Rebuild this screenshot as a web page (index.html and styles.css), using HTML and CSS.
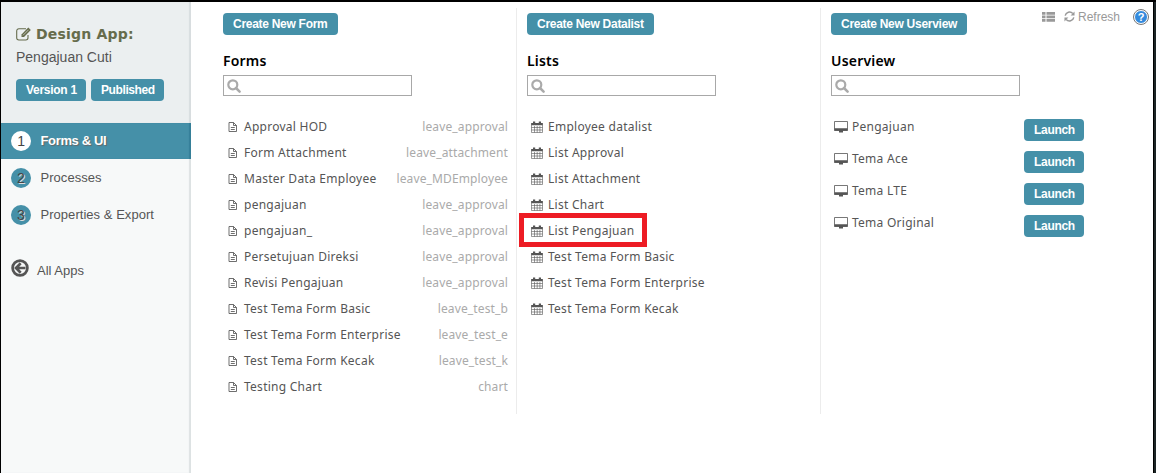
FILE: index.html
```
<!DOCTYPE html>
<html lang="en">
<head>
<meta charset="utf-8">
<title>Design App: Pengajuan Cuti</title>
<link rel="stylesheet" href="styles.css">
</head>
<body>
<svg width="0" height="0" class="defs">
  <symbol id="doc" viewBox="0 0 10 12"><path d="M1 1.500h4.500L8.500 4.500V10.500H1zM5.500 1.500V4.500h3M2.800 6.500h4M2.800 8.500h4" fill="none" stroke="currentColor" stroke-width=".85"/></symbol>
  <symbol id="cal" viewBox="0 0 12 12"><path d="M.5 2.500h11V11.500H.5zM.5 6.500h11M.5 9h11M3.500 5v6.500M6.200 5v6.500M8.900 5v6.500" fill="none" stroke="currentColor" stroke-width=".6"/><path d="M.3 2h11.400v2.300H.3zM2 .5h2.200v3H2zM7.800.5H10v3H7.800z" fill="currentColor"/></symbol>
  <symbol id="screen" viewBox="0 0 14 12"><path d="M.5.5h13v9H.5z" fill="none" stroke="currentColor" stroke-width=".8"/><path d="M.5 7.300h13v2.400H.5zM5 9.500h4v2H5z" fill="currentColor"/></symbol>
  <symbol id="search" viewBox="0 0 14 14"><circle cx="5.800" cy="5.800" r="4.500" fill="none" stroke="currentColor" stroke-width="2.200"/><path d="M9 9l3.600 3.600" stroke="currentColor" stroke-width="2.500" stroke-linecap="round"/></symbol>
</svg>
<div class="app">
  <aside class="side">
    <header class="side-head">
      <h1><svg class="edit" viewBox="0 0 16 14"><path d="M12 8v2.800A2.200 2.200 0 0 1 9.800 13H2.900A2.200 2.200 0 0 1 .7 10.800V4A2.200 2.200 0 0 1 2.900 1.800H10" fill="none" stroke="currentColor" stroke-width="1.100"/><path d="M5.500 7.400L12.300.6l2.500 2.500L8 9.900H5.500z" fill="currentColor"/><path d="M7 8.300l5.500-5.500" stroke="#ebeff0" stroke-width=".6"/></svg><span>Design App:</span></h1>
      <p class="name">Pengajuan Cuti</p>
      <div class="tags"><span class="btn">Version 1</span><span class="btn">Published</span></div>
    </header>
    <nav>
      <a class="step active"><i>1</i><span>Forms &amp; UI</span></a>
      <a class="step"><i>2</i><span>Processes</span></a>
      <a class="step"><i>3</i><span>Properties &amp; Export</span></a>
      <a class="all"><svg viewBox="0 0 18 18"><circle cx="9" cy="9" r="7.400" fill="none" stroke="currentColor" stroke-width="2.700"/><path d="M9.700 4.300L5 9l4.700 4.700M5.500 9h9" fill="none" stroke="currentColor" stroke-width="2.700"/></svg><span>All Apps</span></a>
    </nav>
  </aside>
  <main>
    <section class="col forms">
      <a class="btn">Create New Form</a><h2>Forms</h2>
      <div class="search"><svg><use href="#search"/></svg></div>
      <ul>
        <li><svg><use href="#doc"/></svg><span>Approval HOD</span><em>leave_approval</em></li>
        <li><svg><use href="#doc"/></svg><span>Form Attachment</span><em>leave_attachment</em></li>
        <li><svg><use href="#doc"/></svg><span>Master Data Employee</span><em>leave_MDEmployee</em></li>
        <li><svg><use href="#doc"/></svg><span>pengajuan</span><em>leave_approval</em></li>
        <li><svg><use href="#doc"/></svg><span>pengajuan_</span><em>leave_approval</em></li>
        <li><svg><use href="#doc"/></svg><span>Persetujuan Direksi</span><em>leave_approval</em></li>
        <li><svg><use href="#doc"/></svg><span>Revisi Pengajuan</span><em>leave_approval</em></li>
        <li><svg><use href="#doc"/></svg><span>Test Tema Form Basic</span><em>leave_test_b</em></li>
        <li><svg><use href="#doc"/></svg><span>Test Tema Form Enterprise</span><em>leave_test_e</em></li>
        <li><svg><use href="#doc"/></svg><span>Test Tema Form Kecak</span><em>leave_test_k</em></li>
        <li><svg><use href="#doc"/></svg><span>Testing Chart</span><em>chart</em></li>
      </ul>
    </section>
    <section class="col lists">
      <a class="btn">Create New Datalist</a><h2>Lists</h2>
      <div class="search"><svg><use href="#search"/></svg></div>
      <ul>
        <li><svg><use href="#cal"/></svg><span>Employee datalist</span></li>
        <li><svg><use href="#cal"/></svg><span>List Approval</span></li>
        <li><svg><use href="#cal"/></svg><span>List Attachment</span></li>
        <li><svg><use href="#cal"/></svg><span>List Chart</span></li>
        <li class="marked"><svg><use href="#cal"/></svg><span>List Pengajuan</span></li>
        <li><svg><use href="#cal"/></svg><span>Test Tema Form Basic</span></li>
        <li><svg><use href="#cal"/></svg><span>Test Tema Form Enterprise</span></li>
        <li><svg><use href="#cal"/></svg><span>Test Tema Form Kecak</span></li>
      </ul>
    </section>
    <section class="col views">
      <a class="btn">Create New Userview</a><h2>Userview</h2>
      <div class="search"><svg><use href="#search"/></svg></div>
      <ul>
        <li><svg><use href="#screen"/></svg><span>Pengajuan</span><a class="btn">Launch</a></li>
        <li><svg><use href="#screen"/></svg><span>Tema Ace</span><a class="btn">Launch</a></li>
        <li><svg><use href="#screen"/></svg><span>Tema LTE</span><a class="btn">Launch</a></li>
        <li><svg><use href="#screen"/></svg><span>Tema Original</span><a class="btn">Launch</a></li>
      </ul>
    </section>
  </main>
  <div class="tools">
    <svg class="grid" viewBox="0 0 13 10"><path d="M0 0h3.500v2.700H0zM4.500 0H13v2.700H4.500zM0 3.500h3.500v2.700H0zM4.500 3.500H13v2.700H4.500zM0 7h3.500v2.700H0zM4.500 7H13v2.700H4.500z" fill="currentColor"/></svg>
    <svg class="sync" viewBox="0 0 12 12"><path d="M1.300 5A4.800 4.800 0 0 1 9.600 2.800M10.700 7A4.800 4.800 0 0 1 2.400 9.200" fill="none" stroke="currentColor" stroke-width="1.600"/><path d="M11.500.5v4.300H7.200zM.5 11.500V7.200h4.300z" fill="currentColor"/></svg>
    <span>Refresh</span>
    <b>?</b>
  </div>
  <div class="edge"></div>
</div>
</body>
</html>
```
FILE: styles.css
```
* { box-sizing: border-box; }
body { margin: 0; font-family: "Liberation Sans", Arial, sans-serif; background: #fff; }
h1, h2, p, ul { margin: 0; padding: 0; }
.defs { position: absolute; }
.app { position: relative; display: flex; height: 473px; overflow: hidden; border: solid #000; border-width: 2px 0 0 1px; }
.side { width: 190px; flex: none; background: #f7f9f9; box-shadow: inset -2px 0 1px #dde2e3; color: #555; }
.side-head { height: 121px; padding: 22px 0 0 15px; background: #ebeff0; box-shadow: inset -2px 0 1px #d8dddf; }
h1 { display: flex; align-items: center; height: 20px; color: #666c4c; font: bold 14px/20px "DejaVu Sans", sans-serif; }
h1 span { letter-spacing: .2px; }
.edit { width: 16px; height: 14px; margin-right: 4px; }
.name { font-size: 14px; line-height: 18px; margin-top: 4px; }
.tags { display: flex; gap: 5px; margin-top: 13px; }
.btn { display: inline-block; height: 22px; padding: 0 10px; border-radius: 4px; background: #4590a8; color: #fff; font: bold 12px/22px "Liberation Sans", Arial, sans-serif; letter-spacing: -.28px; white-space: nowrap; }
.tags .btn { padding-right: 9px; }
.tags .btn:first-child { width: 70px; letter-spacing: -.28px; }
.tags .btn:last-child { width: 73px; letter-spacing: -.4px; }
.step { display: flex; align-items: center; height: 37px; padding-left: 10px; font-size: 13px; letter-spacing: .04px; }
.step i { width: 20px; height: 20px; margin-right: 9.5px; border-radius: 50%; background: #4590a8; color: #444; text-align: center; font-style: normal; font-size: 14px; line-height: 20px; text-shadow: 1px 1px #ddd; }
.step.active { height: 36px; background: #4590a8; color: #fff; font-weight: bold; letter-spacing: -.35px; text-shadow: 1px 1px 1px #666; box-shadow: inset -2px 0 1px #357f98; }
.active i { background: #fff; font-weight: normal; text-shadow: none; }
.active span { padding-bottom: 1px; }
.all { display: flex; align-items: center; margin-top: 25px; padding-left: 10px; font-size: 13px; }
.all svg { width: 18px; height: 18px; margin: -2px 8px 0 0; }
.all span { line-height: 16px; padding-top: 5px; }
main { display: flex; padding: 6px 0 0 22px; }
.col { width: 304px; flex: none; height: 406px; padding: 5px 8px 0 10px; border-right: 1px solid #ececec; }
.col > .btn { vertical-align: top; }
.views { border: 0; }
h2 { margin-top: 15px; color: #000; font: 600 14px/22px "Noto Sans", sans-serif; letter-spacing: .2px; }
.search { width: 189px; height: 21px; margin-top: 3px; padding: 3px 3px; border: 1px solid #a8a8a8; color: #aaa; }
.search svg { display: block; width: 14px; height: 14px; }
ul { margin-top: 18px; list-style: none; }
li { display: flex; align-items: center; height: 26px; color: #555; font: 12px/20px "Noto Sans", sans-serif; letter-spacing: .26px; white-space: nowrap; }
li svg { flex: none; width: 12px; height: 12px; margin: 0 5px 0 4px; }
.forms li svg { width: 10px; margin: 0 6px 0 5px; }
em { margin-left: auto; color: #aaa; font-style: normal; letter-spacing: .13px; }
.marked { position: relative; }
.marked::after { content: ""; position: absolute; box-sizing: border-box; left: -8px; top: -5px; width: 128px; height: 34px; border: 5px solid #ed1c24; }
.views li { height: 32px; align-items: flex-start; padding-top: 3px; }
.views li svg { width: 14px; margin: 4px 4px 0 3px; }
.views li .btn { margin: 2px 0 0; padding-right: 9px; letter-spacing: -.3px; }
.views li span { width: 172px; }
.tools { position: absolute; right: 8px; top: 6px; display: flex; align-items: center; height: 17px; color: #999; font-size: 12px; }
.grid { width: 13px; height: 10px; margin-right: 9px; }
.sync { width: 11px; height: 11px; margin-right: 3px; }
.tools b { width: 14px; height: 14px; margin-left: 14px; border: 1px solid #fff; border-radius: 50%; outline: 1px solid #777; background: #338add; color: #fff; text-align: center; font: bold 11px/12px "Liberation Sans", sans-serif; }
.edge { position: absolute; right: 0; top: 0; bottom: 0; width: 3px; background: linear-gradient(90deg, #000 1px, #1c2425 1px); }
```
